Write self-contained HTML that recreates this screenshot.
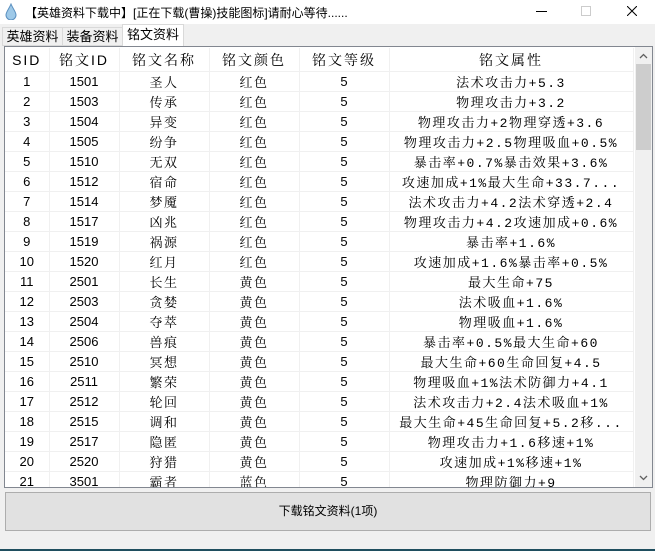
<!DOCTYPE html><html><head><meta charset="utf-8"><style>
body{margin:0;width:655px;height:551px;background:#f0f0f0;position:relative;overflow:hidden;font-family:"Liberation Sans","Noto Sans CJK SC",sans-serif;font-size:12px;color:#000}
.title{position:absolute;left:0;top:0;width:655px;height:24px;background:#fff}
.title span{position:absolute;left:25px;top:4px;font-size:12px}
.tab{position:absolute;top:27px;height:17px;border:1px solid #d9d9d9;background:#f0f0f0;text-align:center;line-height:17px;font-size:13px}
.tbl{position:absolute;left:4px;top:46px;width:647px;height:440px;border:1px solid #828790;background:#fff;overflow:hidden}
table{border-collapse:collapse;position:absolute;left:0;top:1px;table-layout:fixed;width:628px}
td{height:19px;border-right:1px solid #f0f0f0;border-bottom:1px solid #f0f0f0;text-align:center;padding:0;font-size:13px;white-space:nowrap;overflow:hidden;font-family:"Liberation Sans","Noto Serif CJK SC",serif}
td:nth-child(3),td:nth-child(4),td:nth-child(6){letter-spacing:1.5px;font-family:"Liberation Mono","Noto Serif CJK SC",serif}
tr.h td{height:23px;font-size:14px;letter-spacing:2px}
.sb{position:absolute;right:0;top:0;width:17px;height:440px;background:#f0f0f0}
.thumb{position:absolute;left:1px;top:17px;width:15px;height:86px;background:#cdcdcd}
.btn{position:absolute;left:5px;top:492px;width:644px;height:37px;border:1px solid #adadad;background:#e1e1e1;text-align:center;line-height:37px;font-size:12px}
</style></head><body>
<div class="title"><svg style="position:absolute;left:5px;top:3px" width="12" height="17"><path d="M6 1 C4 6 1 9 1 12 A5 5 0 0 0 11 12 C11 9 8 6 6 1Z" fill="#9ec9e8" stroke="#5a8fbf"/></svg><span>【英雄资料下载中】[正在下载(曹操)技能图标]请耐心等待......</span>
<div style="position:absolute;left:536px;top:11px;width:11px;height:1px;background:#000"></div>
<div style="position:absolute;left:581px;top:6px;width:8px;height:8px;border:1px solid #ccc"></div>
<svg style="position:absolute;left:627px;top:6px" width="10" height="10"><path d="M0 0L10 10M10 0L0 10" stroke="#000" stroke-width="1"/></svg></div>
<div class="tab" style="left:2px;width:59px">英雄资料</div>
<div class="tab" style="left:62px;width:59px">装备资料</div>
<div class="tab" style="left:122px;width:60px;top:24px;height:21px;line-height:20px;background:#fff;border-bottom:none;z-index:2">铭文资料</div>
<div class="tbl"><table>
<colgroup><col style="width:44px"><col style="width:70px"><col style="width:90px"><col style="width:90px"><col style="width:90px"><col style="width:244px"></colgroup>
<tr class="h"><td>SID</td><td>铭文ID</td><td>铭文名称</td><td>铭文颜色</td><td>铭文等级</td><td>铭文属性</td></tr>
<tr><td>1</td><td>1501</td><td>圣人</td><td>红色</td><td>5</td><td>法术攻击力+5.3</td></tr>
<tr><td>2</td><td>1503</td><td>传承</td><td>红色</td><td>5</td><td>物理攻击力+3.2</td></tr>
<tr><td>3</td><td>1504</td><td>异变</td><td>红色</td><td>5</td><td>物理攻击力+2物理穿透+3.6</td></tr>
<tr><td>4</td><td>1505</td><td>纷争</td><td>红色</td><td>5</td><td>物理攻击力+2.5物理吸血+0.5%</td></tr>
<tr><td>5</td><td>1510</td><td>无双</td><td>红色</td><td>5</td><td>暴击率+0.7%暴击效果+3.6%</td></tr>
<tr><td>6</td><td>1512</td><td>宿命</td><td>红色</td><td>5</td><td>攻速加成+1%最大生命+33.7...</td></tr>
<tr><td>7</td><td>1514</td><td>梦魇</td><td>红色</td><td>5</td><td>法术攻击力+4.2法术穿透+2.4</td></tr>
<tr><td>8</td><td>1517</td><td>凶兆</td><td>红色</td><td>5</td><td>物理攻击力+4.2攻速加成+0.6%</td></tr>
<tr><td>9</td><td>1519</td><td>祸源</td><td>红色</td><td>5</td><td>暴击率+1.6%</td></tr>
<tr><td>10</td><td>1520</td><td>红月</td><td>红色</td><td>5</td><td>攻速加成+1.6%暴击率+0.5%</td></tr>
<tr><td>11</td><td>2501</td><td>长生</td><td>黄色</td><td>5</td><td>最大生命+75</td></tr>
<tr><td>12</td><td>2503</td><td>贪婪</td><td>黄色</td><td>5</td><td>法术吸血+1.6%</td></tr>
<tr><td>13</td><td>2504</td><td>夺萃</td><td>黄色</td><td>5</td><td>物理吸血+1.6%</td></tr>
<tr><td>14</td><td>2506</td><td>兽痕</td><td>黄色</td><td>5</td><td>暴击率+0.5%最大生命+60</td></tr>
<tr><td>15</td><td>2510</td><td>冥想</td><td>黄色</td><td>5</td><td>最大生命+60生命回复+4.5</td></tr>
<tr><td>16</td><td>2511</td><td>繁荣</td><td>黄色</td><td>5</td><td>物理吸血+1%法术防御力+4.1</td></tr>
<tr><td>17</td><td>2512</td><td>轮回</td><td>黄色</td><td>5</td><td>法术攻击力+2.4法术吸血+1%</td></tr>
<tr><td>18</td><td>2515</td><td>调和</td><td>黄色</td><td>5</td><td>最大生命+45生命回复+5.2移...</td></tr>
<tr><td>19</td><td>2517</td><td>隐匿</td><td>黄色</td><td>5</td><td>物理攻击力+1.6移速+1%</td></tr>
<tr><td>20</td><td>2520</td><td>狩猎</td><td>黄色</td><td>5</td><td>攻速加成+1%移速+1%</td></tr>
<tr><td>21</td><td>3501</td><td>霸者</td><td>蓝色</td><td>5</td><td>物理防御力+9</td></tr>
</table>
<div class="sb"><svg style="position:absolute;left:4px;top:6px" width="9" height="6"><path d="M1 5L4.5 1.5L8 5" stroke="#606060" fill="none" stroke-width="1.3"/></svg><div class="thumb"></div><svg style="position:absolute;left:4px;top:428px" width="9" height="6"><path d="M1 1L4.5 4.5L8 1" stroke="#606060" fill="none" stroke-width="1.3"/></svg></div></div>
<div class="btn">下载铭文资料(1项)</div>
<div style="position:absolute;left:0;top:549px;width:655px;height:2px;background:#1f4e5f"></div>
</body></html>
